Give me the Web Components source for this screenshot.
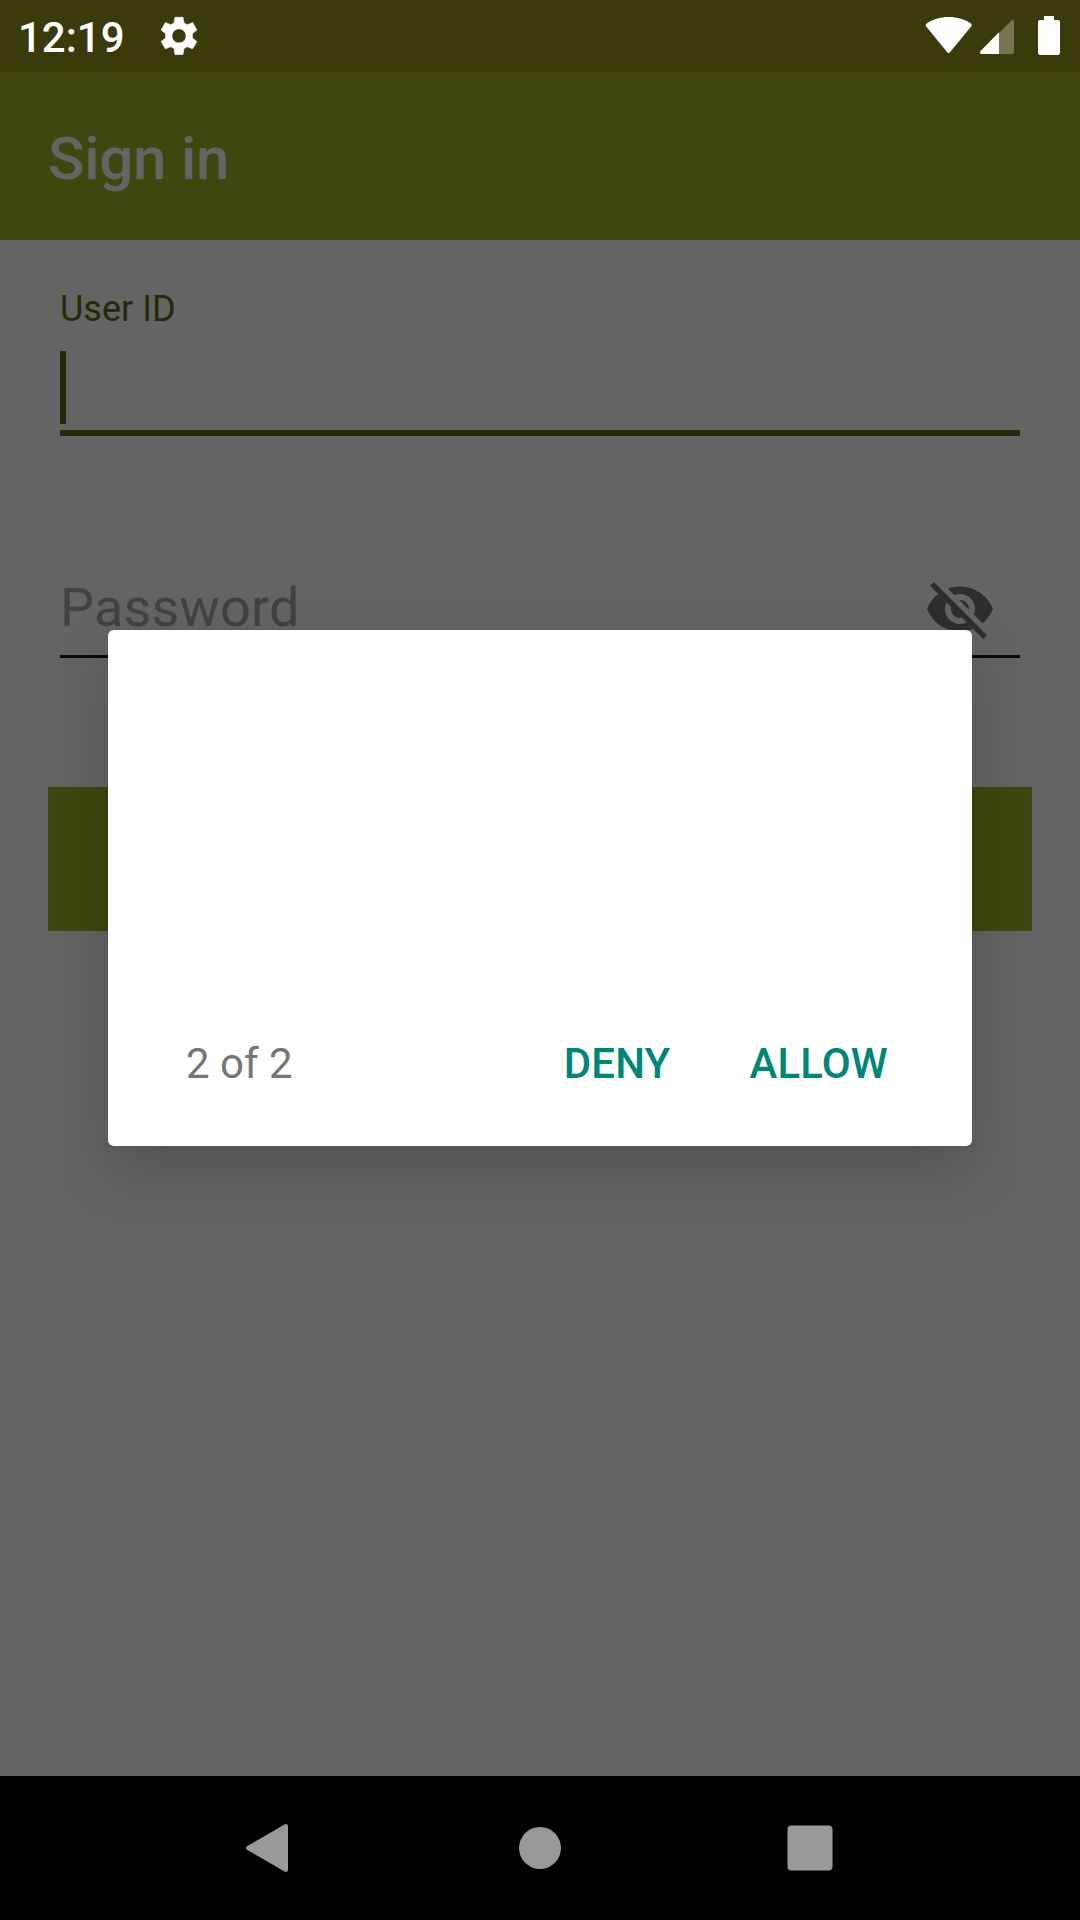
<!DOCTYPE html>
<html lang="en">
<head>
<meta charset="utf-8">
<title>Sign in</title>
<style>
html,body{margin:0;width:1080px;height:1920px;overflow:hidden;background:#000}
body{font-family:Roboto,"Noto Sans",sans-serif}
</style>
</head>
<body>
<phone-screen>
  <status-bar>12:19</status-bar>
  <tool-bar>Sign in</tool-bar>
  <sign-in-form></sign-in-form>
  <nav-bar></nav-bar>
  <permission-dialog slot="overlay">
    <span slot="step">2 of 2</span>
    <dialog-button>DENY</dialog-button>
    <dialog-button>ALLOW</dialog-button>
  </permission-dialog>
</phone-screen>
<script>
function define(name, html) {
  const t = document.createElement('template');
  t.innerHTML = html;
  customElements.define(name, class extends HTMLElement {
    constructor() {
      super();
      this.attachShadow({ mode: 'open' }).append(t.content.cloneNode(true));
    }
  });
}

define('phone-screen', `
<style>
:host{display:flex;flex-direction:column;position:relative;width:1080px;height:1920px;background:#646464;overflow:hidden}
.overlay{position:absolute;left:108px;top:630px}
</style>
<slot></slot><div class="overlay"><slot name="overlay"></slot></div>`);

define('status-bar', `
<style>
:host{display:flex;height:72px;box-sizing:border-box;background:#3a3a0b;color:#fff;padding:0 18px 0 18px}
.time{font-size:42px;line-height:50px;font-weight:500;padding-top:13px;width:142px;white-space:nowrap}
.icons{display:flex;margin-left:auto}
svg{display:block;height:72px}
</style>
<div class="time"><slot></slot></div>
<svg width="38" viewBox="160 0 38 72"><path fill="#fff" fill-rule="evenodd" stroke="#fff" stroke-width=".6" stroke-linejoin="round" d="M175 17.300h8l1 5.600 3.200 1.800 5.400-2.100 4.300 7.300-4.500 3.700v4.400l4.500 3.600-4.300 7.200-5.400-2.100-3.200 1.800-1 6h-8l-1-6-3.200-1.800-5.400 2.100-4.300-7.200 4.500-3.600v-4.400l-4.500-3.700 4.300-7.300 5.400 2.100 3.200-1.800zM179 28.800a7.100 7.100 0 1 0 0 14.200a7.100 7.100 0 1 0 0-14.200z"/></svg>
<div class="icons">
<svg width="142" viewBox="920 0 142 72">
<path fill="#fff" d="M926.300 23.700C938 14.700 959.500 14.700 971.100 23.700Q972.300 24.900 971.300 26.200L950 52.200Q948.600 53.700 947.200 52.200L926 26.200Q925.100 24.900 926.300 23.700z"/>
<path fill="#fff" fill-opacity=".3" d="M999 33L1011.300 20.700Q1014 18.800 1014 21.800V52Q1014 54 1012 54H999z"/>
<path fill="#fff" d="M999 32.300V54H981.500Q979 53.500 980.500 51z"/>
<path fill="#fff" d="M1044 16h10v4h4q2 0 2 2v31q0 2-2 2h-18q-2 0-2-2v-31q0-2 2-2h4z"/>
</svg></div>`);

define('tool-bar', `
<style>
:host{display:flex;height:168px;box-sizing:border-box;background:#3f470f;color:#646464;padding:52px 48px 0;font-size:60px;line-height:70px;font-weight:500;letter-spacing:-.2px}
</style><slot></slot>`);

define('sign-in-form', `
<style>
:host{display:flex;flex-direction:column;height:1536px;box-sizing:border-box;padding:48px 48px 0;background:#646464}
.field{padding:0 12px}
.label{font-size:36px;line-height:42px;color:#242a09}
.caret{width:6px;height:73px;margin-top:21px;background:#242a09}
.line{height:6px;margin-top:6px;background:#242a09}
.password{display:flex;justify-content:space-between;height:82px;margin-top:137px;padding:0 36px 0 12px}
.password span{font-size:54px;line-height:64px;padding-top:3px;letter-spacing:.12px;color:#424242}
.rule{height:3px;margin:0 12px;background:#0a0c0c}
.submit{height:144px;margin-top:129px;background:#3f470f}
svg{display:block}
</style>
<div class="field"><div class="label">User ID</div><div class="caret"></div><div class="line"></div></div>
<div class="password"><span>Password</span>
<svg width="72" height="72" viewBox="0 0 24 24"><defs><clipPath id="strike"><path d="M2 4.27L19.73 22 22.27 19.46 4.54 1.73V1H23V23H1V4.27z"/></clipPath></defs>
<path clip-path="url(#strike)" fill="#2e2e2e" fill-rule="evenodd" d="M12 4.500C7 4.500 2.730 7.610 1 12c1.730 4.390 6 7.500 11 7.500s9.270-3.110 11-7.500c-1.730-4.390-6-7.500-11-7.500zM12 17c-2.760 0-5-2.240-5-5s2.240-5 5-5 5 2.240 5 5-2.240 5-5 5zM12 9c-1.660 0-3 1.340-3 3s1.340 3 3 3 3-1.340 3-3-1.340-3-3-3z"/>
<path fill="none" stroke="#2e2e2e" stroke-width="1.8" d="M2.640 3.640L20.370 21.370"/></svg></div>
<div class="rule"></div>
<div class="submit"></div>`);

define('nav-bar', `
<style>
:host{display:flex;height:144px;background:#000;justify-content:center}
svg{display:block;width:270px;height:144px}
</style>
<svg viewBox="135 1776 270 144"><path fill="#999" d="M247 1846.200L284.500 1824.400Q288 1823 288 1827V1869Q288 1873 284.500 1871.600L247 1849.800Q245 1848 247 1846.200z"/></svg>
<svg viewBox="405 1776 270 144"><circle cx="540" cy="1848" r="21" fill="#999"/></svg>
<svg viewBox="675 1776 270 144"><rect x="787.500" y="1825.500" width="45" height="45" rx="4" fill="#999"/></svg>`);

define('permission-dialog', `
<style>
:host{display:flex;flex-direction:column;justify-content:flex-end;width:864px;height:516px;box-sizing:border-box;border-radius:6px;background:#fff;padding:0 84px 57px 78px;box-shadow:0 24px 60px rgba(0,0,0,.19);clip-path:inset(-60px -48px -90px -48px)}
.row{display:flex;font-size:42px;line-height:50px}
.step{color:#757575}
.actions{display:flex;margin-left:auto;gap:79px}
</style>
<div class="row"><div class="step"><slot name="step"></slot></div><div class="actions"><slot></slot></div></div>`);

define('dialog-button', `
<style>:host{display:block;color:#008577;font-weight:500;letter-spacing:.15px;white-space:nowrap}</style><slot></slot>`);
</script>
</body>
</html>
